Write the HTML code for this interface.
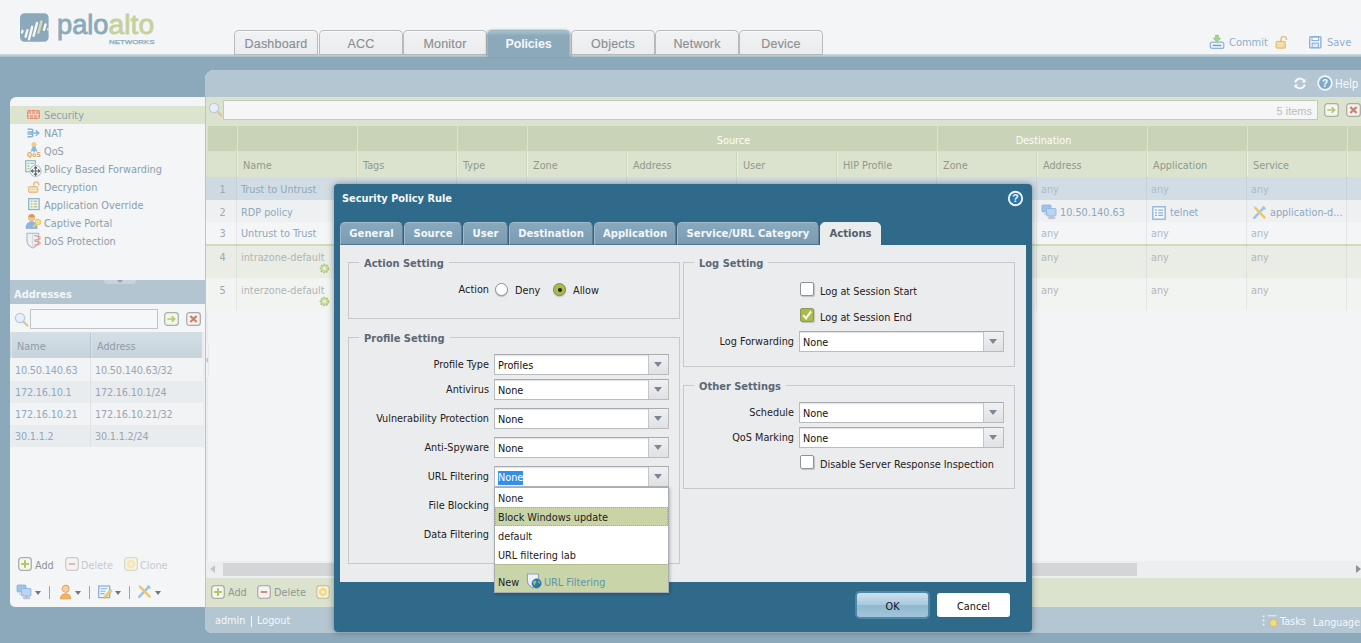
<!DOCTYPE html>
<html lang="en">
<head>
<meta charset="utf-8">
<title>Security Policy Rule</title>
<style>
*{box-sizing:border-box;margin:0;padding:0}
html,body{width:1361px;height:643px;overflow:hidden}
body{position:relative;background:#8ba9bb;font-family:"DejaVu Sans Condensed","Liberation Sans",sans-serif;font-size:10.8px;color:#8a9faa}
.a{position:absolute}
.t{position:absolute;white-space:nowrap;line-height:14px}
.b{font-family:"DejaVu Sans Condensed","Liberation Sans",sans-serif;font-weight:bold}
svg{position:absolute;overflow:visible}
/* header */
#hdr{left:0;top:0;width:1361px;height:54px;background:#f3f5f6}
#hline{left:0;top:54px;width:1361px;height:3px;background:linear-gradient(#d3dde3,#c0d0da 40%,#a3bac9)}
.tab{position:absolute;top:30px;height:25px;width:84px;background:linear-gradient(#f1f2f3,#ebecee);border:1px solid #b7bbbd;border-bottom:1px solid #b4b8ba;border-radius:5px 5px 0 0;text-align:center;font-family:"Liberation Sans",sans-serif;font-size:12.5px;letter-spacing:.2px;color:#8b8f92;-webkit-text-stroke:.15px #8b8f92;line-height:27px;box-shadow:inset 0 1px 0 #fafafa}
.tab.on{-webkit-text-stroke:0;top:30px;height:27px;border-bottom:none;z-index:2;background:linear-gradient(#a9c0cd 0,#8ba9bb 5px);border-color:#9db6c4;color:#f4f8fa;font-weight:bold;letter-spacing:-.15px;box-shadow:1px 0 2px rgba(120,130,135,.5),-1px 0 2px rgba(120,130,135,.4)}
.lnk{color:#8fb0cf;font-size:11px}
/* grid */
.hc{position:absolute;top:152px;height:25px;line-height:27px;padding-left:5px;color:#8f9a8c;border-left:1px solid #eaf0dd;font-size:10.8px}
.gc{position:absolute;top:126px;height:25px;border-left:1px solid #dfe7cf;color:#fdfdfb;padding-left:3px;text-align:center;line-height:29px;font-size:10.8px}
.row{position:absolute;left:208px;width:1153px}
.c{position:absolute;white-space:nowrap;line-height:14px}
.vl{position:absolute;width:1px;background:#e3e6e6}
.nm{color:#8fa9be}
.gy{color:#b1b5b5}
/* modal */
#dlg{left:334px;top:184px;width:698px;height:448px;background:#2f6a8a;border-radius:4px;box-shadow:0 0 6px rgba(40,60,70,.55)}
#dbody{left:340px;top:245px;width:686px;height:337px;background:#ebeced}
.mt{position:absolute;top:222px;height:23px;background:linear-gradient(#88a8bc,#7a9cb3);border:1px solid #a0bac9;border-right-color:#5a7f97;border-bottom:1px solid #4f748c;border-radius:5px 5px 0 0;color:#f3f7f9;text-align:center;line-height:22px;font-family:"DejaVu Sans Condensed","Liberation Sans",sans-serif;font-weight:bold;font-size:11.2px;letter-spacing:0;box-shadow:1px 0 0 #3d6079}
.mt.on{background:#ebeced;border-color:#ebeced;color:#555d66;box-shadow:none;height:24px}
.fs{position:absolute;border:1px solid #c6c8ca}
.lg{margin-top:1px;position:absolute;background:#ebeced;color:#5b6774;font-family:"DejaVu Sans Condensed","Liberation Sans",sans-serif;font-weight:bold;font-size:11px;line-height:14px;padding:0 5px;white-space:nowrap}
.lb{margin-top:1px;position:absolute;color:#222;white-space:nowrap;line-height:14px;text-align:right}
.cb{position:absolute;height:21px;background:#fff;border:1px solid #b9bbbe;border-top-color:#a8aaae;box-shadow:inset 0 1px 1px #e2e2e2;color:#111;line-height:20px;padding-left:3px;padding-top:1px;white-space:nowrap}
.cb i{position:absolute;right:0;top:0;width:20px;height:19px;background:linear-gradient(#f0f1f2,#dfe1e3);border-left:1px solid #c2c5c9}
.cb i:after{content:"";position:absolute;left:5px;top:7px;border:4.5px solid transparent;border-top:5px solid #7c8896;border-bottom:none}
.ck{position:absolute;width:14px;height:14px;background:#fff;border:1px solid #8e9299;border-radius:2px;box-shadow:1px 1px 1px rgba(0,0,0,.18)}
.li{position:absolute;left:0;width:173px;height:19px;line-height:21px;padding-left:3px;color:#222;white-space:nowrap}
</style>
</head>
<body>
<!-- HEADER -->
<div id="hdr" class="a"></div>
<div id="hline" class="a"></div>
<svg class="a" style="left:0;top:0" width="170" height="54">
<rect x="20" y="13.2" width="28.6" height="28.6" rx="4.5" fill="#8ba9bb"/>
<g stroke="#f6f8f9" stroke-width="2.4" stroke-linecap="round">
<line x1="22" y1="32.4" x2="22.5" y2="30.8"/>
<line x1="25.6" y1="36.8" x2="27.4" y2="30.2"/>
<line x1="29" y1="39.2" x2="32.2" y2="26.8"/>
<line x1="33.6" y1="35.8" x2="37" y2="23"/>
<line x1="38.4" y1="32.8" x2="41.4" y2="21.4" stroke="#d3dda6"/>
<line x1="44" y1="29.8" x2="45.5" y2="24.4"/>
</g>
<rect x="47.2" y="28" width="1.6" height="2.6" fill="#e9eef1"/>
<text x="57" y="34.4" font-family="Liberation Sans, sans-serif" font-size="27" fill="#8ba9bb" stroke="#8ba9bb" stroke-width=".8" textLength="51.5" lengthAdjust="spacingAndGlyphs">palo</text>
<text x="108.6" y="34.4" font-family="Liberation Sans, sans-serif" font-size="27" fill="#c5d19d" stroke="#c5d19d" stroke-width=".8" textLength="45.6" lengthAdjust="spacingAndGlyphs">alto</text>
<text x="109" y="43.9" font-family="Liberation Sans, sans-serif" font-size="5.9" fill="#8ba9bb" stroke="#8ba9bb" stroke-width=".25" textLength="45.5" lengthAdjust="spacingAndGlyphs">NETWORKS</text>
</svg>
<div class="tab" style="left:234px;width:84px">Dashboard</div>
<div class="tab" style="left:319px;width:84px">ACC</div>
<div class="tab" style="left:403px;width:84px">Monitor</div>
<div class="tab on" style="left:487px;width:83px">Policies</div>
<div class="tab" style="left:571px;width:84px">Objects</div>
<div class="tab" style="left:655px;width:84px">Network</div>
<div class="tab" style="left:739px;width:84px">Device</div>

<svg style="left:1209px;top:34px" width="16" height="16" viewBox="0 0 16 16" ><path d="M6.600 1.200h2.800v3h2.200L8 8 4.400 4.200h2.200z" fill="#a5d694" stroke="#86c07a" stroke-width=".7"/><rect x="1.200" y="8.200" width="13.600" height="6.200" rx="2" fill="#eaf2fa" stroke="#8db4da" stroke-width="1.200"/><rect x="3.800" y="10.800" width="8.400" height="1.300" fill="#6f9cc9"/></svg><div class="t lnk" style="left:1229px;top:36px">Commit</div><svg style="left:1275px;top:35px" width="13" height="14" viewBox="0 0 13 14" ><path d="M6 6.5V4.2a2.7 2.7 0 0 1 5.4 0v.8" fill="none" stroke="#e6c387" stroke-width="1.6"/><rect x="1" y="6.4" width="9.4" height="6.8" rx="1" fill="#f1d49e" stroke="#e0b774" stroke-width=".9"/><path d="M2.4 8.6h6.6M2.4 10.8h6.6" stroke="#f8e8c6" stroke-width="1"/></svg><svg style="left:1309px;top:36px" width="13" height="13" viewBox="0 0 13 13" ><rect x=".700" y=".700" width="11.200" height="11.200" rx="1" fill="#eef4fa" stroke="#88aed6" stroke-width="1.300"/><rect x="3" y="1.200" width="6.600" height="3.400" fill="#fff" stroke="#88aed6" stroke-width="1"/><rect x="3.200" y="7.200" width="6.200" height="4.400" fill="#dce8f4" stroke="#88aed6" stroke-width="1"/></svg><div class="t lnk" style="left:1327px;top:36px">Save</div>
<div class="a" style="left:10px;top:97px;width:195px;height:510px;background:#f3f5f6;border-radius:6px 0 0 5px"></div><div class="a" style="left:10px;top:106px;width:195px;height:18px;background:#dce3ce"></div><div class="t" style="left:44px;top:109px;color:#8c9fab">Security</div><div class="t" style="left:44px;top:127px;color:#8c9fab">NAT</div><div class="t" style="left:44px;top:145px;color:#8c9fab">QoS</div><div class="t" style="left:44px;top:163px;color:#8c9fab">Policy Based Forwarding</div><div class="t" style="left:44px;top:181px;color:#8c9fab">Decryption</div><div class="t" style="left:44px;top:199px;color:#8c9fab">Application Override</div><div class="t" style="left:44px;top:217px;color:#8c9fab">Captive Portal</div><div class="t" style="left:44px;top:235px;color:#8c9fab">DoS Protection</div><svg style="left:27px;top:110px" width="13" height="9" viewBox="0 0 13 9" ><rect x=".5" y=".5" width="12" height="8" rx="1" fill="#f0a98f" stroke="#e58e72" stroke-width="1"/><path d="M.5 4.5h12M4.4 .5v4M8.6 .5v4M2.4 4.5v4M6.5 4.5v4M10.6 4.5v4" stroke="#f8d3c4" stroke-width=".9"/></svg><svg style="left:26px;top:127px" width="15" height="12" viewBox="0 0 15 12" ><path d="M1.5 2.2h4a1.4 1.4 0 0 1 0 2.8h-4M1.5 9.8h4a1.4 1.4 0 0 0 0-2.8h-4M1.5 2.2v.1M5 6h6.2M9.8 3.2 12.8 6 9.8 8.8" fill="none" stroke="#86b3dc" stroke-width="1.5"/></svg><svg style="left:26px;top:142px" width="16" height="15" viewBox="0 0 16 15" ><circle cx="8" cy="2.6" r="2.1" fill="#f3d27a" stroke="#e6bd5a" stroke-width=".6"/><path d="M6.6 4.4 4.4 9.8l2.4-.8L8 11l1.2-2 2.4.8-2.2-5.4z" fill="#8db8df"/></svg><div class="t b" style="left:27px;top:151px;font-size:6.800px;line-height:8px;color:#e5a860;letter-spacing:0">QoS</div><svg style="left:25px;top:160px" width="18" height="18" viewBox="0 0 18 18" ><rect x=".7" y=".7" width="9.6" height="11" fill="#eef6ee" stroke="#8fb7c9" stroke-width="1.2"/><path d="M2.4 3.4h2M5.4 3.4h3.6M2.4 6h2M2.4 8.6h2" stroke="#9ccf9a" stroke-width="1.3"/><circle cx="10.6" cy="11" r="5.6" fill="#f4f6f8" stroke="#b9c3cd" stroke-width="1.1"/><path d="M10.6 6.6v8.8M6.2 11H15M10.6 6.4l-1.4 1.8h2.8zM10.6 15.6l-1.4-1.8h2.8zM6 11l1.8-1.4v2.8zM15.2 11l-1.8-1.4v2.8z" fill="#5c6670" stroke="#5c6670" stroke-width=".9"/></svg><svg style="left:27px;top:180px" width="14" height="14" viewBox="0 0 14 14" ><path d="M6.800 6.800V4.600a2.500 2.500 0 0 1 5 0v.8" fill="none" stroke="#e8c48a" stroke-width="1.600"/><rect x="1.400" y="6.600" width="9.400" height="5.800" rx="1" fill="#f2d6a1" stroke="#e1b876" stroke-width=".9"/><path d="M2.600 8.600h7M2.600 10.500h7" stroke="#f9ebcd" stroke-width=".9"/></svg><svg style="left:28px;top:198px" width="12" height="13" viewBox="0 0 12 13" ><rect x=".700" y=".700" width="10.400" height="10.800" fill="#f2f7f4" stroke="#8fb4c9" stroke-width="1.300"/><path d="M2.600 3.200h2M5.600 3.200h3.600" stroke="#9fd09c" stroke-width="1.500"/><path d="M2.600 6h2M5.600 6h3.600" stroke="#efb08f" stroke-width="1.500"/><path d="M2.600 8.800h2M5.600 8.800h3.600" stroke="#9fd09c" stroke-width="1.500"/></svg><svg style="left:25px;top:213px" width="18" height="18" viewBox="0 0 18 18" ><circle cx="6.6" cy="4.6" r="3.3" fill="#f3c796" stroke="#d9a56b" stroke-width=".6"/><path d="M3.4 3.6a3.4 3.4 0 0 1 6.4-.4 5 5 0 0 1-6.4.4z" fill="#d79a55"/><path d="M1 15.4c0-4.6 2.4-6.6 5.6-6.6s5.600 2 5.600 6.600z" fill="#8fb5e2" stroke="#7aa3d6" stroke-width=".6"/><circle cx="13" cy="9" r="2.8" fill="#f6de8a" stroke="#e8c65c" stroke-width=".9"/><path d="M11 11l-3 3.400" stroke="#ecd06e" stroke-width="1.600"/></svg><svg style="left:26px;top:232px" width="16" height="17" viewBox="0 0 16 17" ><path d="M1 1.200h11.600v7.600c0 3.800-2.800 6-5.800 7.200C3.800 14.800 1 12.600 1 8.800z" fill="#edf1f5" stroke="#aab8c6" stroke-width="1.100"/><path d="M6.800 1.600v14" stroke="#c3cdd8" stroke-width=".8"/><path d="M8.400 3.400l6.200 1.800M8.400 8.400l6.200-1.800M8.400 8.800l6.200 1.800M8.400 13.400l6.200-1.800" stroke="#e89a92" stroke-width="1.300"/></svg><div class="a" style="left:10px;top:280px;width:195px;height:24px;background:#b3c5d1"></div><div class="a" style="left:104px;top:280px;width:32px;height:4px;background:#c7d3dc;border-radius:0 0 4px 4px"></div><div class="a" style="left:117px;top:280px;border:3px solid transparent;border-top:3px solid #8fa3b0;border-bottom:none"></div><div class="t b" style="left:14px;top:288px;font-size:11px;color:#f3f6f8">Addresses</div><svg style="left:14px;top:312px" width="15" height="15" viewBox="0 0 15 15" ><circle cx="6" cy="6" r="4.6" fill="#e6eff8" stroke="#bccbdc" stroke-width="1.3"/><line x1="9.6" y1="9.8" x2="13.4" y2="13.6" stroke="#e2c49a" stroke-width="2.4" stroke-linecap="round"/></svg><div class="a" style="left:30px;top:309px;width:128px;height:20px;background:#f6f7f8;border:1px solid #bfc3c6"></div><svg style="left:164px;top:312px" width="15" height="14" viewBox="0 0 16 16" preserveAspectRatio="none"><rect x=".75" y=".75" width="14.5" height="14.5" rx="3" fill="#f3f5ee" stroke="#a9b0a4" stroke-width="1.3"/><path d="M3.6 8h7.4M8.2 4.8 11.4 8 8.2 11.2" fill="none" stroke="#b7c56c" stroke-width="1.7"/></svg><svg style="left:186px;top:312px" width="15" height="14" viewBox="0 0 16 16" preserveAspectRatio="none"><rect x=".75" y=".75" width="14.5" height="14.5" rx="3" fill="#f5f1ee" stroke="#a9aaa6" stroke-width="1.3"/><path d="M4.6 4.6l6.8 6.8M11.4 4.6l-6.8 6.8" fill="none" stroke="#c7826f" stroke-width="2.4"/></svg><div class="a" style="left:10px;top:332px;width:193px;height:27px;background:linear-gradient(#d4dee5,#c6d3dc)"></div><div class="a" style="left:202px;top:333px;width:3px;height:115px;background:#eceff2"></div><div class="a" style="left:11px;top:333px;width:1px;height:25px;background:#dbe3e9"></div><div class="a" style="left:90px;top:333px;width:1px;height:25px;background:#b4c3cd"></div><div class="a" style="left:91px;top:333px;width:1px;height:25px;background:#dbe3e9"></div><div class="t" style="left:17px;top:340px;color:#8e9ca5">Name</div><div class="t" style="left:97px;top:340px;color:#8e9ca5">Address</div><div class="a" style="left:10px;top:358px;width:193px;height:23px;background:#f1f3f4"></div><div class="t" style="left:15px;top:364px;letter-spacing:-.2px;color:#8fa9c0">10.50.140.63</div><div class="t" style="left:95px;top:364px;letter-spacing:-.2px;color:#9aa5ad">10.50.140.63/32</div><div class="a" style="left:10px;top:381px;width:193px;height:22px;background:#e8ecef"></div><div class="t" style="left:15px;top:386px;letter-spacing:-.2px;color:#8fa9c0">172.16.10.1</div><div class="t" style="left:95px;top:386px;letter-spacing:-.2px;color:#9aa5ad">172.16.10.1/24</div><div class="a" style="left:10px;top:403px;width:193px;height:22px;background:#f1f3f4"></div><div class="t" style="left:15px;top:408px;letter-spacing:-.2px;color:#8fa9c0">172.16.10.21</div><div class="t" style="left:95px;top:408px;letter-spacing:-.2px;color:#9aa5ad">172.16.10.21/32</div><div class="a" style="left:10px;top:425px;width:193px;height:22px;background:#e8ecef"></div><div class="t" style="left:15px;top:430px;letter-spacing:-.2px;color:#8fa9c0">30.1.1.2</div><div class="t" style="left:95px;top:430px;letter-spacing:-.2px;color:#9aa5ad">30.1.1.2/24</div><div class="a" style="left:90px;top:358px;width:1px;height:89px;background:#dde2e6"></div><svg style="left:18px;top:557px" width="14" height="14" viewBox="0 0 14 14" ><rect x=".7" y=".7" width="12.6" height="12.6" rx="2.800" fill="#f4f6ef" stroke="#a8b1a3" stroke-width="1.300"/><path d="M7 3.200v7.600M3.200 7h7.600" stroke="#b5c465" stroke-width="2"/></svg><div class="t" style="left:35px;top:559px;color:#8a9398">Add</div><svg style="left:65px;top:557px" width="14" height="14" viewBox="0 0 14 14" opacity="0.55"><rect x=".7" y=".7" width="12.6" height="12.6" rx="2.800" fill="#f6f2f1" stroke="#b0aeae" stroke-width="1.300"/><path d="M3.800 7h6.400" stroke="#cf8d86" stroke-width="2"/></svg><div class="t" style="left:81px;top:559px;color:#c5cacd">Delete</div><svg style="left:124px;top:557px" width="14" height="14" viewBox="0 0 14 14" opacity="0.55"><rect x=".7" y=".7" width="12.6" height="12.6" rx="2.800" fill="#f8f1d9" stroke="#c9c3a4" stroke-width="1.300"/><circle cx="7" cy="7" r="4.200" fill="#f4dc8c"/><circle cx="7" cy="7" r="1.500" fill="#fbf3cf"/></svg><div class="t" style="left:140px;top:559px;color:#c5cacd">Clone</div><svg style="left:16px;top:584px" width="16" height="16" viewBox="0 0 16 16" ><rect x="1" y="1" width="9" height="7" rx="1" fill="#9fc3ea" stroke="#88aede" stroke-width=".8"/><rect x="5.5" y="4.5" width="9.5" height="7.5" rx="1" fill="#b9d5f2" stroke="#8bb1e0" stroke-width=".8"/><path d="M3 9.6h4.5v1.2H3z" fill="#b7c3d3"/><ellipse cx="10.6" cy="13.8" rx="3.8" ry="1.5" fill="#c7c3df"/><path d="M9.4 12h2.4v1.6H9.4z" fill="#aebbd0"/></svg><div class="a" style="left:35px;top:591px;border:3px solid transparent;border-top:4px solid #6e7880;border-bottom:none"></div><div class="a" style="left:49px;top:586px;width:1px;height:13px;background:#9aa3a9"></div><svg style="left:59px;top:584px" width="14" height="16" viewBox="0 0 14 16" ><circle cx="6.6" cy="4.800" r="3.400" fill="#f6d2a6" stroke="#e4a860" stroke-width="1.100"/><path d="M1.400 14.800c0-3.400 2.200-5 5.200-5s5.200 1.600 5.200 5z" fill="#f2b267" stroke="#e59a48" stroke-width=".8"/></svg><div class="a" style="left:75px;top:591px;border:3px solid transparent;border-top:4px solid #6e7880;border-bottom:none"></div><div class="a" style="left:89px;top:586px;width:1px;height:13px;background:#9aa3a9"></div><svg style="left:98px;top:585px" width="15" height="14" viewBox="0 0 15 14" ><rect x=".7" y="1" width="11" height="11.600" fill="#eef5fb" stroke="#86aed8" stroke-width="1.200"/><path d="M2.400 3.800h7M2.400 6.200h5M2.400 8.600h4" stroke="#8db4dc" stroke-width="1.100"/><path d="M6.400 11l6-6.600 1.800 1.600-6 6.600-2.400.8z" fill="#f0cf6e" stroke="#d8ad45" stroke-width=".6"/></svg><div class="a" style="left:115px;top:591px;border:3px solid transparent;border-top:4px solid #6e7880;border-bottom:none"></div><div class="a" style="left:129px;top:586px;width:1px;height:13px;background:#9aa3a9"></div><svg style="left:137px;top:584px" width="15" height="15" viewBox="0 0 15 15" ><path d="M2.2 12.8 11 3.6" stroke="#9cc3e6" stroke-width="2.4" stroke-linecap="round"/><path d="M10 1.4a2.8 2.8 0 0 1 3.6 3.4l-1.8-.4-1.2-1.4z" fill="#9cc3e6"/><path d="M3 2.6 12.6 12.6" stroke="#e8c76b" stroke-width="2.3" stroke-linecap="round"/><path d="M1.4 1.2 4.4 2 3 4.2z" fill="#c9cfd6"/></svg><div class="a" style="left:155px;top:591px;border:3px solid transparent;border-top:4px solid #6e7880;border-bottom:none"></div>
<!--MAIN--><div class="a" style="left:205px;top:70px;width:1156px;height:563px;background:#f3f4f5;border-radius:9px 0 0 7px;overflow:hidden"><div class="a" style="left:0;top:0;width:1156px;height:27px;background:#b4c6d2"></div><div class="a" style="left:0;top:27px;width:1156px;height:29px;background:#dbe3ce"></div><div class="a" style="left:0;top:56px;width:3px;height:51px;background:#dbe3ce"></div><div class="a" style="left:0;top:107px;width:3px;height:385px;background:#e9edef"></div><div class="a" style="left:0;top:491px;width:1156px;height:17px;background:#eceeef"></div><div class="a" style="left:18px;top:493px;width:914px;height:13px;background:#d3d5d7"></div><div class="a" style="left:5px;top:495px;border:4px solid transparent;border-right:5px solid #c3c6c9;border-left:none"></div><div class="a" style="left:1151px;top:495px;border:4px solid transparent;border-left:5px solid #8f9396;border-right:none"></div><div class="a" style="left:0;top:508px;width:1156px;height:29px;background:#dbe3ce"></div><div class="a" style="left:0;top:537px;width:1156px;height:26px;background:#b4c6d2"></div><div class="a" style="left:0;top:27px;width:1px;height:510px;background:#b3c6d2"></div></div><svg style="left:1293px;top:77px" width="14" height="13" viewBox="0 0 14 13" ><path d="M2.2 5.400A5 5 0 0 1 11 3.600M11.800 7.600A5 5 0 0 1 3 9.400" fill="none" stroke="#f4f7f9" stroke-width="1.900"/><path d="M12.600 1.400v4h-4zM1.400 11.600v-4h4z" fill="#f4f7f9"/></svg><svg style="left:1317px;top:75px" width="16" height="16" viewBox="0 0 16 16" ><circle cx="8" cy="8" r="6.800" fill="#7fa8c7" stroke="#f2f6f9" stroke-width="1.700"/><text x="8" y="12" text-anchor="middle" font-family="Liberation Sans, sans-serif" font-weight="bold" font-size="10.500" fill="#f6f9fb">?</text></svg><div class="t" style="left:1335px;top:77px;color:#f6f9fb;font-size:11.4px">Help</div><svg style="left:208px;top:102px" width="15" height="15" viewBox="0 0 15 15" ><circle cx="6" cy="6" r="4.6" fill="#e6eff8" stroke="#bccbdc" stroke-width="1.3"/><line x1="9.6" y1="9.8" x2="13.4" y2="13.6" stroke="#e2c49a" stroke-width="2.4" stroke-linecap="round"/></svg><div class="a" style="left:223px;top:100px;width:1095px;height:20px;background:#f5f6f8;border:1px solid #c5cabd"></div><div class="t" style="left:1270px;top:104px;width:42px;text-align:right;color:#b9bdbe;font-family:Liberation Sans,sans-serif;font-size:11px">5 items</div><svg style="left:1324px;top:103px" width="15" height="14" viewBox="0 0 16 16" preserveAspectRatio="none"><rect x=".75" y=".75" width="14.5" height="14.5" rx="3" fill="#f3f5ee" stroke="#a9b0a4" stroke-width="1.3"/><path d="M3.6 8h7.4M8.2 4.8 11.4 8 8.2 11.2" fill="none" stroke="#b7c56c" stroke-width="1.7"/></svg><svg style="left:1346px;top:103px" width="15" height="14" viewBox="0 0 16 16" preserveAspectRatio="none"><rect x=".75" y=".75" width="14.5" height="14.5" rx="3" fill="#f5f1ee" stroke="#a9aaa6" stroke-width="1.3"/><path d="M4.6 4.6l6.8 6.8M11.4 4.6l-6.8 6.8" fill="none" stroke="#c7826f" stroke-width="2.4"/></svg><div class="a" style="left:208px;top:126px;width:1153px;height:26px;background:#c9d3b7;border-bottom:1px solid #d8e1c4"></div><div class="a" style="left:208px;top:152px;width:1153px;height:25px;background:#dbe3ce"></div><div class="a" style="left:237px;top:126px;width:1px;height:25px;background:#dde6cc"></div><div class="a" style="left:357px;top:126px;width:1px;height:25px;background:#dde6cc"></div><div class="a" style="left:457px;top:126px;width:1px;height:25px;background:#dde6cc"></div><div class="a" style="left:527px;top:126px;width:1px;height:25px;background:#dde6cc"></div><div class="a" style="left:937px;top:126px;width:1px;height:25px;background:#dde6cc"></div><div class="a" style="left:1147px;top:126px;width:1px;height:25px;background:#dde6cc"></div><div class="a" style="left:1247px;top:126px;width:1px;height:25px;background:#dde6cc"></div><div class="a" style="left:1347px;top:126px;width:1px;height:25px;background:#dde6cc"></div><div class="gc" style="left:527px;width:410px;border:none">Source</div><div class="gc" style="left:937px;width:210px;border:none">Destination</div><div class="hc" style="left:237px;width:100px">Name</div><div class="a" style="left:236px;top:152px;width:1px;height:25px;background:#cdd6bd"></div><div class="hc" style="left:357px;width:100px">Tags</div><div class="a" style="left:356px;top:152px;width:1px;height:25px;background:#cdd6bd"></div><div class="hc" style="left:457px;width:100px">Type</div><div class="a" style="left:456px;top:152px;width:1px;height:25px;background:#cdd6bd"></div><div class="hc" style="left:527px;width:100px">Zone</div><div class="a" style="left:526px;top:152px;width:1px;height:25px;background:#cdd6bd"></div><div class="hc" style="left:627px;width:100px">Address</div><div class="a" style="left:626px;top:152px;width:1px;height:25px;background:#cdd6bd"></div><div class="hc" style="left:737px;width:100px">User</div><div class="a" style="left:736px;top:152px;width:1px;height:25px;background:#cdd6bd"></div><div class="hc" style="left:837px;width:100px">HIP Profile</div><div class="a" style="left:836px;top:152px;width:1px;height:25px;background:#cdd6bd"></div><div class="hc" style="left:937px;width:100px">Zone</div><div class="a" style="left:936px;top:152px;width:1px;height:25px;background:#cdd6bd"></div><div class="hc" style="left:1037px;width:100px">Address</div><div class="a" style="left:1036px;top:152px;width:1px;height:25px;background:#cdd6bd"></div><div class="hc" style="left:1147px;width:100px">Application</div><div class="a" style="left:1146px;top:152px;width:1px;height:25px;background:#cdd6bd"></div><div class="hc" style="left:1247px;width:100px">Service</div><div class="a" style="left:1246px;top:152px;width:1px;height:25px;background:#cdd6bd"></div><div class="hc" style="left:1347px;width:100px"></div><div class="a" style="left:1346px;top:152px;width:1px;height:25px;background:#cdd6bd"></div><div class="a" style="left:206px;top:177px;width:1155px;height:23px;background:#d2dce4"></div><div class="a" style="left:206px;top:200px;width:1155px;height:22px;background:#eef0f2"></div><div class="a" style="left:206px;top:222px;width:1155px;height:22px;background:#f4f5f6"></div><div class="a" style="left:206px;top:246px;width:1155px;height:32px;background:#e9ede5"></div><div class="a" style="left:206px;top:278px;width:1155px;height:33px;background:#f2f4f1"></div><div class="a" style="left:206px;top:177px;width:31px;height:23px;background:#ced9e1"></div><div class="a" style="left:206px;top:244px;width:1155px;height:2px;background:#cfdbb6"></div><div class="a" style="left:236px;top:177px;width:1px;height:134px;background:rgba(150,160,165,.16)"></div><div class="a" style="left:356px;top:177px;width:1px;height:134px;background:rgba(150,160,165,.16)"></div><div class="a" style="left:456px;top:177px;width:1px;height:134px;background:rgba(150,160,165,.16)"></div><div class="a" style="left:526px;top:177px;width:1px;height:134px;background:rgba(150,160,165,.16)"></div><div class="a" style="left:626px;top:177px;width:1px;height:134px;background:rgba(150,160,165,.16)"></div><div class="a" style="left:736px;top:177px;width:1px;height:134px;background:rgba(150,160,165,.16)"></div><div class="a" style="left:836px;top:177px;width:1px;height:134px;background:rgba(150,160,165,.16)"></div><div class="a" style="left:936px;top:177px;width:1px;height:134px;background:rgba(150,160,165,.16)"></div><div class="a" style="left:1036px;top:177px;width:1px;height:134px;background:rgba(150,160,165,.16)"></div><div class="a" style="left:1146px;top:177px;width:1px;height:134px;background:rgba(150,160,165,.16)"></div><div class="a" style="left:1246px;top:177px;width:1px;height:134px;background:rgba(150,160,165,.16)"></div><div class="a" style="left:1346px;top:177px;width:1px;height:134px;background:rgba(150,160,165,.16)"></div><div class="t" style="left:208px;top:183px;width:29px;text-align:center;color:#a0a8ad">1</div><div class="t nm" style="left:241px;top:183px">Trust to Untrust</div><div class="t" style="left:1041px;top:183px;color:#a9bccb">any</div><div class="t" style="left:1151px;top:183px;color:#a9bccb">any</div><div class="t" style="left:1251px;top:183px;color:#a9bccb">any</div><div class="t" style="left:208px;top:206px;width:29px;text-align:center;color:#a0a8ad">2</div><div class="t nm" style="left:241px;top:206px">RDP policy</div><div class="t" style="left:208px;top:227px;width:29px;text-align:center;color:#a0a8ad">3</div><div class="t nm" style="left:241px;top:227px">Untrust to Trust</div><div class="t" style="left:1041px;top:227px;color:#a9bccb">any</div><div class="t" style="left:1151px;top:227px;color:#a9bccb">any</div><div class="t" style="left:1251px;top:227px;color:#a9bccb">any</div><div class="t" style="left:208px;top:251px;width:29px;text-align:center;color:#a0a8ad">4</div><div class="t gy" style="left:241px;top:251px">intrazone-default</div><div class="t" style="left:1041px;top:251px;color:#b3b7b7">any</div><div class="t" style="left:1151px;top:251px;color:#b3b7b7">any</div><div class="t" style="left:1251px;top:251px;color:#b3b7b7">any</div><div class="t" style="left:208px;top:284px;width:29px;text-align:center;color:#a0a8ad">5</div><div class="t gy" style="left:241px;top:284px">interzone-default</div><div class="t" style="left:1041px;top:284px;color:#b3b7b7">any</div><div class="t" style="left:1151px;top:284px;color:#b3b7b7">any</div><div class="t" style="left:1251px;top:284px;color:#b3b7b7">any</div><svg style="left:1041px;top:204px" width="16" height="16" viewBox="0 0 16 16" ><rect x="1" y="1" width="9" height="7" rx="1" fill="#9fc3ea" stroke="#88aede" stroke-width=".8"/><rect x="5.5" y="4.5" width="9.5" height="7.5" rx="1" fill="#b9d5f2" stroke="#8bb1e0" stroke-width=".8"/><path d="M3 9.6h4.5v1.2H3z" fill="#b7c3d3"/><ellipse cx="10.6" cy="13.8" rx="3.8" ry="1.5" fill="#c7c3df"/><path d="M9.4 12h2.4v1.6H9.4z" fill="#aebbd0"/></svg><div class="t nm" style="left:1060px;top:206px">10.50.140.63</div><svg style="left:1152px;top:206px" width="14" height="14" viewBox="0 0 14 14" ><rect x=".8" y=".8" width="12.4" height="12.4" fill="#f2f7fb" stroke="#8eb2d3" stroke-width="1.3"/><path d="M3 4.2h2M6.2 4.2h5M3 6.8h2M6.2 6.8h5M3 9.4h2M6.2 9.4h5" stroke="#8fb3d4" stroke-width="1.3"/></svg><div class="t nm" style="left:1170px;top:206px">telnet</div><svg style="left:1252px;top:205px" width="15" height="15" viewBox="0 0 15 15" ><path d="M2.2 12.8 11 3.6" stroke="#9cc3e6" stroke-width="2.4" stroke-linecap="round"/><path d="M10 1.4a2.8 2.8 0 0 1 3.6 3.4l-1.8-.4-1.2-1.4z" fill="#9cc3e6"/><path d="M3 2.6 12.6 12.600" stroke="#e8c76b" stroke-width="2.300" stroke-linecap="round"/><path d="M1.400 1.200 4.400 2 3 4.200z" fill="#c9cfd6"/></svg><div class="t nm" style="left:1270px;top:206px">application-d...</div><svg style="left:319px;top:263px" width="11" height="11" viewBox="0 0 11 11" ><circle cx="5.5" cy="5.5" r="4" fill="#c8dca4" stroke="#a9c77c" stroke-width="1.6" stroke-dasharray="1.7 1.2"/><circle cx="5.5" cy="5.5" r="1.4" fill="#eef3e3"/></svg><svg style="left:319px;top:296px" width="11" height="11" viewBox="0 0 11 11" ><circle cx="5.5" cy="5.5" r="4" fill="#c8dca4" stroke="#a9c77c" stroke-width="1.6" stroke-dasharray="1.7 1.2"/><circle cx="5.5" cy="5.5" r="1.4" fill="#eef3e3"/></svg><svg style="left:211px;top:585px" width="14" height="14" viewBox="0 0 14 14" ><rect x=".7" y=".7" width="12.6" height="12.6" rx="2.800" fill="#f4f6ef" stroke="#a8b1a3" stroke-width="1.300"/><path d="M7 3.200v7.600M3.200 7h7.600" stroke="#b5c465" stroke-width="2"/></svg><div class="t" style="left:228px;top:586px;color:#8d9890">Add</div><svg style="left:257px;top:585px" width="14" height="14" viewBox="0 0 14 14" opacity="1"><rect x=".7" y=".7" width="12.6" height="12.6" rx="2.800" fill="#f6f2f1" stroke="#b0aeae" stroke-width="1.300"/><path d="M3.800 7h6.400" stroke="#cf8d86" stroke-width="2"/></svg><div class="t" style="left:274px;top:586px;color:#8d9890">Delete</div><svg style="left:316px;top:585px" width="14" height="14" viewBox="0 0 14 14" opacity="1"><rect x=".7" y=".7" width="12.6" height="12.6" rx="2.800" fill="#f8f1d9" stroke="#c9c3a4" stroke-width="1.300"/><circle cx="7" cy="7" r="4.200" fill="#f4dc8c"/><circle cx="7" cy="7" r="1.500" fill="#fbf3cf"/></svg><div class="t" style="left:215px;top:614px;color:#f5f8fa;font-size:10.8px">admin</div><div class="a" style="left:251px;top:616px;width:1px;height:11px;background:#f5f8fa"></div><div class="t" style="left:257px;top:614px;color:#f5f8fa;font-size:10.8px">Logout</div><svg style="left:1262px;top:614px" width="17" height="14" viewBox="0 0 17 14" ><path d="M1.600 1.400v1.800M1.600 5.600v1.800M1.600 9.800v1.800" stroke="#eef3f6" stroke-width="1.600"/><path d="M5.600 1.800h9" stroke="#eef3f6" stroke-width="1"/><circle cx="11.400" cy="9" r="3.600" fill="#f1d98c" stroke="#ddb862" stroke-width="1.300" stroke-dasharray="1.600 1"/></svg><div class="t" style="left:1280px;top:615px;color:#f5f8fa;font-size:10.8px">Tasks</div><div class="t" style="left:1313px;top:615px;color:#f5f8fa;font-size:10.6px">Language</div><!--/MAIN-->
<div class="a" style="left:206px;top:343px;width:3px;height:34px;background:#f0f2f4;border-right:1px solid #e6e9ec"></div><div class="a" style="left:205px;top:357px;border:3px solid transparent;border-right:3px solid #c3ccd2;border-left:none"></div><!--MODAL--><div id="dlg" class="a"></div><div class="t b" style="left:342px;top:192px;font-size:10.9px;color:#f6f9fb">Security Policy Rule</div><svg style="left:1007px;top:190px" width="17" height="17" viewBox="0 0 17 17" ><circle cx="8.500" cy="8.500" r="6.700" fill="#2c77ad" stroke="#eef4f8" stroke-width="1.900"/><text x="8.500" y="12.300" text-anchor="middle" font-family="Liberation Sans, sans-serif" font-weight="bold" font-size="10.500" fill="#f6f9fb">?</text></svg><div class="mt" style="left:340px;width:63px">General</div><div class="mt" style="left:404px;width:58px">Source</div><div class="mt" style="left:463px;width:45px">User</div><div class="mt" style="left:509px;width:84px">Destination</div><div class="mt" style="left:594px;width:82px">Application</div><div class="mt" style="left:677px;width:142px">Service/URL Category</div><div class="mt on" style="left:820px;width:61px">Actions</div><div id="dbody" class="a"></div><div class="fs" style="left:348px;top:262px;width:332px;height:57px"></div><div class="lg" style="left:359px;top:256px">Action Setting</div><div class="fs" style="left:348px;top:337px;width:332px;height:227px"></div><div class="lg" style="left:359px;top:331px">Profile Setting</div><div class="fs" style="left:683px;top:262px;width:332px;height:105px"></div><div class="lg" style="left:694px;top:256px">Log Setting</div><div class="fs" style="left:683px;top:385px;width:332px;height:104px"></div><div class="lg" style="left:694px;top:379px">Other Settings</div><div class="lb" style="left:400px;width:89px;top:282px">Action</div><div class="a" style="left:495px;top:283px;width:13px;height:13px;border-radius:50%;background:#fff;border:1px solid #8c9197;box-shadow:0 1px 1px rgba(0,0,0,.2)"></div><div class="lb" style="left:515px;top:283px">Deny</div><div class="a" style="left:553px;top:283px;width:13px;height:13px;border-radius:50%;background:#a8bb45;border:1px solid #7f8a5c;box-shadow:0 1px 1px rgba(0,0,0,.2)"></div><div class="a" style="left:557.500px;top:287.500px;width:4px;height:4px;border-radius:50%;background:#222"></div><div class="lb" style="left:573px;top:283px">Allow</div><div class="lb" style="left:350px;width:139px;top:357px">Profile Type</div><div class="cb" style="left:494px;top:354px;width:175px">Profiles<i></i></div><div class="lb" style="left:350px;width:139px;top:382px">Antivirus</div><div class="cb" style="left:494px;top:379px;width:175px">None<i></i></div><div class="lb" style="left:350px;width:139px;top:411px">Vulnerability Protection</div><div class="cb" style="left:494px;top:408px;width:175px">None<i></i></div><div class="lb" style="left:350px;width:139px;top:440px">Anti-Spyware</div><div class="cb" style="left:494px;top:437px;width:175px">None<i></i></div><div class="lb" style="left:350px;width:139px;top:469px">URL Filtering</div><div class="cb" style="left:494px;top:466px;width:175px"><span style="background:#3390e8;color:#fff;display:inline-block;line-height:14px;height:14px">None</span><i></i></div><div class="lb" style="left:350px;width:139px;top:498px">File Blocking</div><div class="cb" style="left:494px;top:495px;width:175px">None<i></i></div><div class="lb" style="left:350px;width:139px;top:527px">Data Filtering</div><div class="cb" style="left:494px;top:524px;width:175px">None<i></i></div><div class="ck" style="left:800px;top:282px"></div><div class="lb" style="left:820px;top:284px">Log at Session Start</div><div class="ck" style="left:800px;top:308px;background:#a9bc4b;border-color:#8c9a55"></div><svg style="left:801px;top:309px" width="12" height="12" viewBox="0 0 12 12" ><path d="M2.200 6.200 5 9.400 10 2.400" fill="none" stroke="#fff" stroke-width="2"/></svg><div class="lb" style="left:820px;top:310px">Log at Session End</div><div class="lb" style="left:690px;width:104px;top:334px">Log Forwarding</div><div class="cb" style="left:799px;top:331px;width:205px">None<i></i></div><div class="lb" style="left:690px;width:104px;top:405px">Schedule</div><div class="cb" style="left:799px;top:402px;width:205px">None<i></i></div><div class="lb" style="left:690px;width:104px;top:430px">QoS Marking</div><div class="cb" style="left:799px;top:427px;width:205px">None<i></i></div><div class="ck" style="left:800px;top:455px"></div><div class="lb" style="left:820px;top:457px">Disable Server Response Inspection</div><div class="a" style="left:494px;top:487px;width:175px;height:106px;background:#fff;border:1px solid #a9adb3;box-shadow:1px 1px 3px rgba(0,0,0,.25)"><div class="li" style="top:0">None</div><div class="li" style="top:19px;background:#c9d4a6;border:1px dotted #a3b07c;line-height:19px;padding-left:2px">Block Windows update</div><div class="li" style="top:38px">default</div><div class="li" style="top:57px">URL filtering lab</div><div class="a" style="left:0;top:76px;width:173px;height:28px;background:#c9d4a8;border-top:1px solid #b3bf8f"></div><div class="li" style="top:84px">New</div><svg style="left:31px;top:85px" width="16" height="17" viewBox="0 0 16 17" ><path d="M1.400 1h11v6.600c0 3.600-2.600 6-5.500 7.400C4 13.600 1.400 11.200 1.400 7.600z" fill="#eef2f6" stroke="#8da3b5" stroke-width="1.100"/><circle cx="10.600" cy="10.400" r="4.500" fill="#2f74b5" stroke="#245f96" stroke-width=".7"/><path d="M7.400 8.200c1.600-1.400 3.200-.6 3 .8s-1.800 1.200-1.400 3.400c-1.600-.6-2.400-2.400-1.600-4.200zM12.200 7.400c1.200.6 2 1.800 2 3-1.400.4-2.400-1-2-3z" fill="#86cc6c"/></svg><div class="li" style="top:84px;left:46px;width:auto;color:#5e96ad">URL Filtering</div></div><div class="a" style="left:855px;top:591px;width:75px;height:28px;border-radius:5px;background:#5f97b8;border:2px solid #4f87ab"></div><div class="a" style="left:857px;top:593px;width:71px;height:24px;border-radius:3px;background:linear-gradient(#cfe1ee 0,#a9c9de 48%,#8fb8d2 52%,#a3c5da 100%);color:#111;text-align:center;line-height:27px">OK</div><div class="a" style="left:937px;top:593px;width:73px;height:24px;border-radius:3px;background:#fff;color:#111;text-align:center;line-height:27px">Cancel</div><!--/MODAL-->
</body>
</html>
